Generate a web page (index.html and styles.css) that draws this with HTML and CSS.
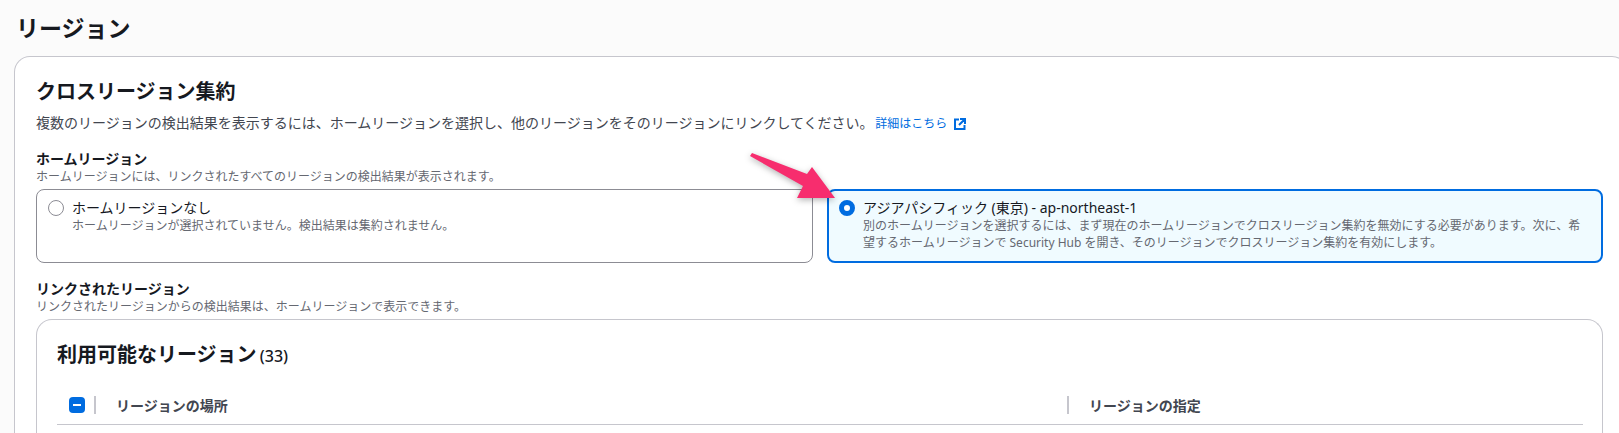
FILE: index.html

```html
<!DOCTYPE html>
<html lang="ja">
<head>
    <meta charset="UTF-8">
    <title>リージョン</title>
    <link rel="stylesheet" href="styles.css">
</head>
<body>
    <h1 class="pagetitle">リージョン</h1>
    <div class="card">
        <h2 class="cardtitle">クロスリージョン集約</h2>
        <p class="intro">複数のリージョンの検出結果を表示するには、ホームリージョンを選択し、他のリージョンをそのリージョンにリンクしてください。
            <a class="infolink" href="#">詳細はこちら<svg class="exticon" viewBox="0 0 12 12"><path d="M5 1.5H1V11H10.5V7M6 1H11V6M11 1L5 7"/></svg></a>
        </p>
        <div class="field">
            <div class="label">ホームリージョン</div>
            <div class="hint">ホームリージョンには、リンクされたすべてのリージョンの検出結果が表示されます。</div>
            <div class="tiles">
                <div class="tile">
                    <span class="radio"></span>
                    <div>
                        <div class="tilename">ホームリージョンなし</div>
                        <div class="tiledesc">ホームリージョンが選択されていません。検出結果は集約されません。</div>
                    </div>
                </div>
                <div class="tile selected">
                    <span class="radio on"></span>
                    <div>
                        <div class="tilename">アジアパシフィック (東京) - ap-northeast-1</div>
                        <div class="tiledesc">別のホームリージョンを選択するには、まず現在のホームリージョンでクロスリージョン集約を無効にする必要があります。次に、希望するホームリージョンで Security Hub を開き、そのリージョンでクロスリージョン集約を有効にします。</div>
                    </div>
                </div>
            </div>
        </div>
        <div class="field linked">
            <div class="label">リンクされたリージョン</div>
            <div class="hint">リンクされたリージョンからの検出結果は、ホームリージョンで表示できます。</div>
            <div class="panel">
                <h3 class="paneltitle">利用可能なリージョン <span class="count">(33)</span></h3>
                <div class="tablehead">
                    <div class="checkcell"><span class="check"></span></div>
                    <div class="col first">リージョンの場所</div>
                    <div class="col">リージョンの指定</div>
                </div>
            </div>
        </div>
    </div>
    <svg class="arrow" viewBox="0 0 120 70"><path d="M0 3L2 0L57 21L62 14L85 45L47 45L53 33Z"/></svg>
</body>
</html>
```

FILE: styles.css

```css
html, body{
    height: 433px;
    overflow: hidden;
}
body{
    margin: 0;
    background-color: #fbfbfb;
    color: #16191f;
    font-family: "Noto Sans", "Noto Sans CJK JP", sans-serif;
    font-size: 12px;
}
.pagetitle{
    margin: 0;
    padding: 11px 0 0 16px;
    height: 56px;
    box-sizing: border-box;
    font-size: 23px;
    line-height: 34px;
    font-weight: 700;
}
.card{
    margin: 0 -9px 0 14px;
    padding: 21px 24px 0 21px;
    height: 377px;
    box-sizing: border-box;
    background-color: #fff;
    border: 1px solid #c6c6cd;
    border-bottom: none;
    border-radius: 16px 16px 0 0;
}
.cardtitle{
    margin: 0;
    font-size: 20px;
    line-height: 28px;
    font-weight: 700;
}
.intro{
    margin: 7px 0 0;
    font-size: 14px;
    line-height: 20px;
    color: #424650;
}
.infolink{
    margin-left: -2px;
    color: #006ce0;
    text-decoration: none;
    font-size: 12px;
}
.exticon{
    width: 12px;
    height: 12px;
    margin-left: 7px;
    vertical-align: -2px;
    fill: none;
    stroke: #006ce0;
    stroke-width: 2;
}
.field{
    margin-top: 16px;
}
.label{
    font-size: 14px;
    line-height: 18px;
    font-weight: 700;
}
.hint{
    margin-top: 1px;
    font-size: 12px;
    line-height: 16px;
    color: #656871;
}
.tiles{
    display: grid;
    grid-template-columns: 777px 776px;
    gap: 14px;
    margin-top: 4px;
}
.tile{
    display: flex;
    gap: 8px;
    height: 74px;
    box-sizing: border-box;
    padding: 8px 11px;
    background-color: #fff;
    border: 1px solid #8c8c94;
    border-radius: 8px;
}
.tile.selected{
    background-color: #f0fbff;
    border: 2px solid #006ce0;
    padding: 7px 10px;
}
.radio{
    flex: none;
    width: 14px;
    height: 14px;
    margin-top: 2px;
    border: 1px solid #8c8c94;
    border-radius: 50%;
    background-color: #fff;
}
.radio.on{
    width: 6px;
    height: 6px;
    border: 5px solid #006ce0;
}
.tilename{
    font-size: 14px;
    line-height: 19px;
}
.tiledesc{
    font-size: 12px;
    line-height: 17px;
    color: #656871;
}
.linked{
    margin-top: 17px;
}
.panel{
    margin-top: 4px;
    height: 114px;
    box-sizing: border-box;
    padding: 21px 19px 0 20px;
    background-color: #fff;
    border: 1px solid #c6c6cd;
    border-bottom: none;
    border-radius: 16px 16px 0 0;
}
.paneltitle{
    margin: 0;
    font-size: 20px;
    line-height: 28px;
    font-weight: 700;
}
.count{
    margin-left: -2px;
    font-weight: 500;
    font-size: 16px;
}
.tablehead{
    display: flex;
    align-items: center;
    height: 39px;
    margin-top: 15px;
    border-bottom: 1px solid #c6c6cd;
    font-size: 14px;
    font-weight: 700;
    color: #424650;
}
.checkcell{
    display: flex;
    width: 37px;
    box-sizing: border-box;
    padding-left: 12px;
}
.check{
    position: relative;
    width: 16px;
    height: 16px;
    border-radius: 4px;
    background-color: #006ce0;
}
.check::after{
    content: "";
    position: absolute;
    left: 4px;
    top: 7px;
    width: 8px;
    height: 2px;
    background-color: #fff;
}
.col{
    display: flex;
    align-items: center;
    gap: 20px;
}
.col::before{
    content: "";
    width: 2px;
    height: 18px;
    background-color: #c6c6cd;
}
.col.first{
    width: 973px;
}
.arrow{
    position: absolute;
    left: 750px;
    top: 153px;
    width: 120px;
    height: 70px;
    fill: #f72d6e;
    filter: drop-shadow(0 2px 3px rgba(0,0,0,0.3));
}
```
